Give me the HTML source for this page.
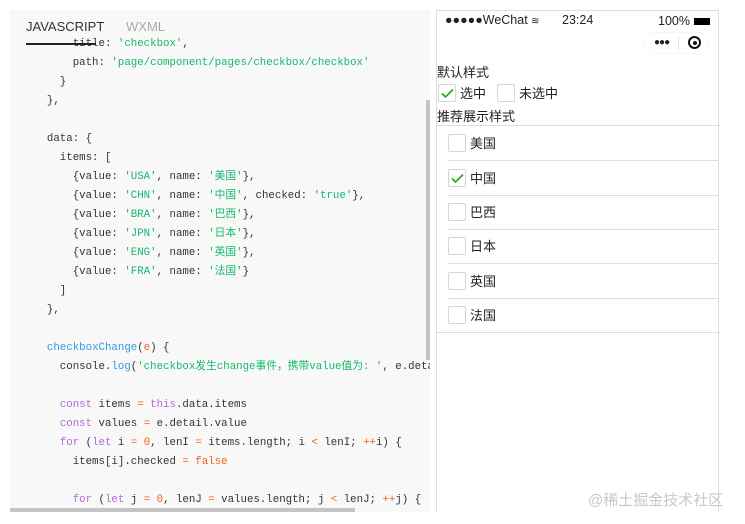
<!DOCTYPE html>
<html><head><meta charset="utf-8">
<style>
*{margin:0;padding:0;box-sizing:border-box}
body{width:745px;height:524px;background:#fff;position:relative;overflow:hidden;font-family:"Liberation Sans","Noto Sans CJK SC",sans-serif}
.code{position:absolute;left:10px;top:10px;width:420px;height:502px;background:#f8f8f8;overflow:hidden}
.tab{position:absolute;top:9px;font-size:13px;color:#333}
.ul{position:absolute;left:16px;top:33px;width:70px;height:2px;background:#222;z-index:2}
.lines{position:absolute;left:24px;top:25px;font-family:"Liberation Mono","Noto Sans CJK SC",monospace;font-size:10.75px;color:#333;white-space:pre;line-height:19px}
.s{color:#14b96c}.k{color:#b36ad6}.f{color:#2d9ee6}.n{color:#e8651a}
.vs{position:absolute;left:416px;top:90px;width:4px;height:260px;background:#c4c4c4}
.hs{position:absolute;left:0;top:498px;width:345px;height:4px;background:#c4c4c4}
.phone{position:absolute;left:436px;top:10px;width:283px;height:502px;border:1px solid #ddd;border-bottom:none;background:#fff;font-size:13px;color:#222}
.cb{display:inline-block;width:18px;height:18px;border:1px solid #d5d5d5;border-radius:2px;background:#fff;vertical-align:middle;position:relative}
.cb svg{position:absolute;left:2px;top:3px}
.row{position:absolute;left:11px;height:34.5px;width:271px;border-bottom:1px solid #ddd;display:flex;align-items:center}
.row span{margin-left:4px}
.row span.cb{margin-left:0}
</style></head><body>
<div class="code">
<div class="tab" style="left:16px">JAVASCRIPT</div>
<div class="tab" style="left:116px;color:#aaa">WXML</div>
<div class="ul"></div>
<div class="lines">      title: <span class="s">'checkbox'</span>,
      path: <span class="s">'page/component/pages/checkbox/checkbox'</span>
    }
  },

  data: {
    items: [
      {value: <span class="s">'USA'</span>, name: <span class="s">'美国'</span>},
      {value: <span class="s">'CHN'</span>, name: <span class="s">'中国'</span>, checked: <span class="s">'true'</span>},
      {value: <span class="s">'BRA'</span>, name: <span class="s">'巴西'</span>},
      {value: <span class="s">'JPN'</span>, name: <span class="s">'日本'</span>},
      {value: <span class="s">'ENG'</span>, name: <span class="s">'英国'</span>},
      {value: <span class="s">'FRA'</span>, name: <span class="s">'法国'</span>}
    ]
  },

  <span class="f">checkboxChange</span>(<span class="n">e</span>) {
    console.<span class="f">log</span>(<span class="s">'checkbox发生change事件，携带value值为: '</span>, e.detail.value)

    <span class="k">const</span> items <span class="n">=</span> <span class="k">this</span>.data.items
    <span class="k">const</span> values <span class="n">=</span> e.detail.value
    <span class="k">for</span> (<span class="k">let</span> i <span class="n">=</span> <span class="n">0</span>, lenI <span class="n">=</span> items.length; i <span class="n">&lt;</span> lenI; <span class="n">++</span>i) {
      items[i].checked <span class="n">=</span> <span class="n">false</span>

      <span class="k">for</span> (<span class="k">let</span> j <span class="n">=</span> <span class="n">0</span>, lenJ <span class="n">=</span> values.length; j <span class="n">&lt;</span> lenJ; <span class="n">++</span>j) {</div>
<div class="vs"></div><div class="hs"></div>
</div>
<div class="phone">
<div style="position:absolute;left:8px;top:2px;font-size:12.5px">●●●●●WeChat <span style="font-size:10px">≋</span></div>
<div style="position:absolute;left:125px;top:2px;font-size:12.5px">23:24</div>
<div style="position:absolute;left:221px;top:3px;font-size:12.5px">100%</div>
<div style="position:absolute;left:257px;top:7px;width:16px;height:7px;border:1px solid #000;background:#000"></div>
<div style="position:absolute;left:207px;top:21px;width:64px;height:22px;border-radius:11px;border:1px solid #f6f6f6"></div>
<div style="position:absolute;left:217px;top:26px;font-size:10px;letter-spacing:-1px">●●●</div>
<div style="position:absolute;left:241px;top:25px;width:1px;height:14px;background:#e5e5e5"></div>
<div style="position:absolute;left:251px;top:25px;width:13px;height:13px;border:2px solid #111;border-radius:50%"></div>
<div style="position:absolute;left:256px;top:30px;width:4px;height:4px;background:#111;border-radius:50%"></div>
<div style="position:absolute;left:0;top:51px">默认样式</div>
<div style="position:absolute;left:1px;top:72px;display:flex;align-items:center">
<span class="cb"><svg width="13" height="11" viewBox="0 0 13 11"><path d="M1 5.5L4.5 9L12 1.5" stroke="#1aad19" stroke-width="1.6" fill="none"/></svg></span><span style="margin-left:4px">选中</span>
<span class="cb" style="margin-left:11px"></span><span style="margin-left:4px">未选中</span></div>
<div style="position:absolute;left:0;top:95px">推荐展示样式</div>
<div style="position:absolute;left:0;top:114px;width:283px;height:1px;background:#ddd"></div>
<div class="row" style="top:115px"><span class="cb"></span><span>美国</span></div>
<div class="row" style="top:150px"><span class="cb"><svg width="13" height="11" viewBox="0 0 13 11"><path d="M1 5.5L4.5 9L12 1.5" stroke="#1aad19" stroke-width="1.6" fill="none"/></svg></span><span>中国</span></div>
<div class="row" style="top:184px"><span class="cb"></span><span>巴西</span></div>
<div class="row" style="top:218px"><span class="cb"></span><span>日本</span></div>
<div class="row" style="top:253px"><span class="cb"></span><span>英国</span></div>
<div class="row" style="top:287px;left:0;width:283px;padding-left:11px"><span class="cb"></span><span>法国</span></div>
</div>
<div style="position:absolute;left:588px;top:489px;font-size:15px;color:#c8c8c8">@稀土掘金技术社区</div>
</body></html>
